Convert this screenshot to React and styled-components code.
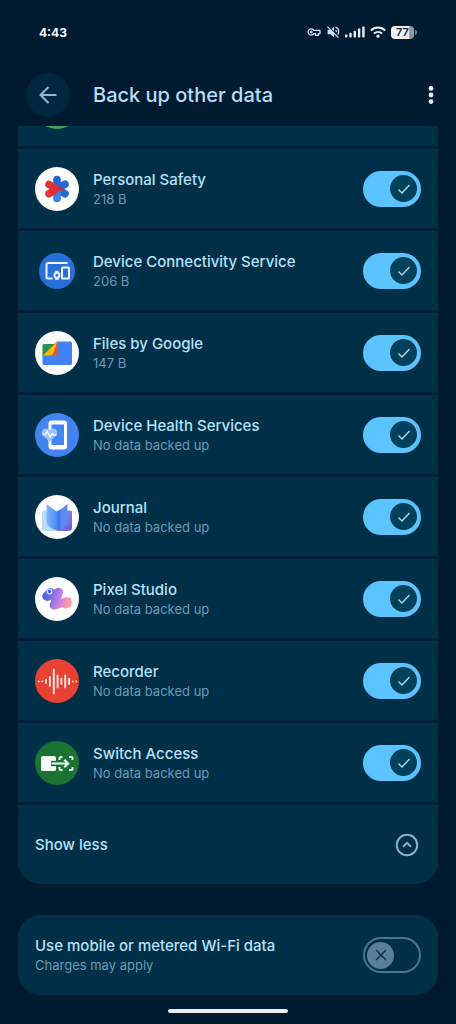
import React, { useState } from 'react';
import styled, { createGlobalStyle } from 'styled-components';

const GlobalStyle = createGlobalStyle`
    * {
        box-sizing: border-box;
    }
    body {
        margin: 0;
        background: #001a2f;
        font-family: Inter, 'Open Sans', sans-serif;
    }
`

const Screen = styled.div`
    display: flex;
    flex-direction: column;
    min-height: 100vh;
    color: #b5e2fc;
`

const StatusBar = styled.div`
    display: flex;
    align-items: center;
    justify-content: space-between;
    height: 64px;
    padding: 0 39px;
`

const Clock = styled.time`
    color: #f2f9ff;
    font-size: 12px;
    font-weight: 700;
`

const StatusIcons = styled.div`
    display: flex;
    align-items: center;
    gap: 5px;
    > svg {
        display: block;
    }
`

const AppBar = styled.header`
    display: flex;
    align-items: center;
    height: 62px;
    padding: 0 18px 0 26px;
`

const BackButton = styled.button`
    display: flex;
    align-items: center;
    justify-content: center;
    width: 44px;
    height: 44px;
    padding: 0;
    border: 0;
    border-radius: 50%;
    background: #002740;
    color: #8fb9d3;
    cursor: pointer;
`

const PageTitle = styled.h1`
    flex: 1;
    margin: 0 0 0 23px;
    color: #b9dcf8;
    font-size: 20px;
    font-weight: 450;
    line-height: 28px;
`

const MenuButton = styled.button`
    display: flex;
    padding: 8px 4px;
    border: 0;
    background: none;
    color: #e6f4ff;
    cursor: pointer;
`

const Content = styled.main`
    display: flex;
    flex-direction: column;
    gap: 31px;
    padding: 0 18px;
`

const AppList = styled.ul`
    display: flex;
    flex-direction: column;
    gap: 3px;
    margin: 0;
    padding: 0;
    list-style: none;
    overflow: hidden;
    border-radius: 0 0 22px 22px;
    background: #001f3b;
`

const Row = styled.li`
    display: flex;
    align-items: center;
    flex-shrink: 0;
    gap: 14px;
    height: 79px;
    padding: 0 17px;
    background: #002f48;
`

// row that is mostly scrolled under the app bar
const ScrolledRow = styled.li`
    display: flex;
    align-items: flex-end;
    height: 20px;
    overflow: hidden;
    background: #002f48;
`

const IconSlot = styled.div`
    display: flex;
    flex-shrink: 0;
    > svg {
        display: block;
        width: 44px;
        height: 44px;
    }
`

const RowText = styled.div`
    display: flex;
    flex: 1;
    flex-direction: column;
    min-width: 0;
`

const RowTitle = styled.label`
    font-size: 15px;
    font-weight: 500;
    line-height: 20px;
`

const RowDetail = styled.span`
    color: #6b9bb8;
    font-size: 13px;
    line-height: 18px;
`

const SwitchBox = styled.span`
    display: grid;
    flex-shrink: 0;
    align-items: center;
    > * {
        grid-area: 1 / 1;
    }
`

const SwitchInput = styled.input`
    appearance: none;
    width: 58px;
    height: 36px;
    margin: 0;
    border: 2px solid #4a7590;
    border-radius: 18px;
    background: transparent;
    cursor: pointer;
    &:checked {
        border-color: #5bc3fd;
        background: #5bc3fd;
    }
`

const Thumb = styled.span`
    display: flex;
    align-items: center;
    justify-content: center;
    justify-self: ${({ $on }) => ($on ? 'end' : 'start')};
    width: 27px;
    height: 27px;
    margin: 0 4px;
    border-radius: 50%;
    background: ${({ $on }) => ($on ? '#00405a' : '#597f9b')};
    color: ${({ $on }) => ($on ? '#a9d8f0' : '#002f48')};
    pointer-events: none;
`

const ShowLess = styled.button`
    display: flex;
    flex: 1;
    align-items: center;
    justify-content: space-between;
    height: 100%;
    padding: 0 2px 0 0;
    border: 0;
    background: none;
    color: inherit;
    font-family: inherit;
    font-size: 15px;
    font-weight: 500;
    cursor: pointer;
    > svg {
        color: #82b2cf;
    }
`

const Card = styled.section`
    display: flex;
    align-items: center;
    height: 80px;
    padding: 0 17px;
    border-radius: 22px;
    background: #002f48;
`

const HomeIndicator = styled.div`
    width: 120px;
    height: 4px;
    margin: auto auto 11px;
    border-radius: 2px;
    background: #e9eef5;
`

function KeyIcon() {
    return (
        <svg width="14" height="10" viewBox="0 0 14 10" fill="none" stroke="#d3e3ef" strokeWidth="1.2">
            <path d="M6.8 3.4A3.1 3.1 0 1 0 6.8 6.6H8.6V8.4H11.4V6.6H13V3.4Z" strokeLinejoin="round" />
            <circle cx="4.2" cy="5" r="0.9" />
        </svg>
    )
}

function MutedIcon() {
    return (
        <svg width="14" height="14" viewBox="0 0 14 14" fill="none" stroke="#d3e3ef" strokeWidth="1.3">
            <path d="M1.6 4.8H4.3L8 8.5V12L4.6 9.2H1.6Z" fill="#d3e3ef" stroke="none" />
            <path d="M5.6 3.9L8 1.9V6.3Z" fill="#d3e3ef" stroke="none" />
            <path d="M1.4 1.6L12.4 12.6" />
            <path d="M9.6 2.2C11.8 3 12.8 5 12.6 7.2C12.5 8.2 12.2 9 11.7 9.7M9.6 5.2C10.2 5.7 10.5 6.4 10.4 7.2" />
        </svg>
    )
}

function SignalIcon() {
    return (
        <svg width="20" height="12" viewBox="0 0 20 12" fill="#e6f1fa">
            <rect x="0" y="8.4" width="2.4" height="3.1" rx="0.8" />
            <rect x="4.3" y="6.8" width="2.4" height="4.7" rx="0.8" />
            <rect x="8.6" y="4.8" width="2.4" height="6.7" rx="0.8" />
            <rect x="12.9" y="2.6" width="2.4" height="8.9" rx="0.8" />
            <rect x="17.2" y="0.4" width="2.4" height="11.1" rx="0.8" />
        </svg>
    )
}

function WifiIcon() {
    return (
        <svg width="16" height="12" viewBox="0 0 16 12" fill="none" stroke="#e6f1fa" strokeWidth="2">
            <path d="M0.9 4.6C5 0.6 11 0.6 15.1 4.6" />
            <path d="M3.9 7.6C6.3 5.4 9.7 5.4 12.1 7.6" />
            <circle cx="8" cy="10.2" r="1.6" fill="#e6f1fa" stroke="none" />
        </svg>
    )
}

const Battery = styled.div`
    display: flex;
    align-items: center;
    gap: 1px;
    &::after {
        content: '';
        width: 2px;
        height: 5px;
        border-radius: 0 2px 2px 0;
        background: #6d8292;
    }
`

const BatteryLevel = styled.span`
    width: 23px;
    height: 13px;
    border-radius: 4px;
    background: linear-gradient(to right, #f1f5f8 77%, #8b9ba8 77%);
    color: #10273a;
    font-size: 11px;
    font-weight: 600;
    line-height: 13px;
    text-align: center;
`

function SafetyIcon() {
    return (
        <svg viewBox="0 0 44 44" strokeLinecap="round">
            <defs>
                <linearGradient id="safetyRed" gradientUnits="userSpaceOnUse" x1="10" y1="0" x2="29" y2="0">
                    <stop offset="0.3" stopColor="#e8322f" />
                    <stop offset="1" stopColor="#b5304f" />
                </linearGradient>
            </defs>
            <circle cx="22" cy="22" r="22" fill="#fff" />
            <g stroke="#2767d2" strokeWidth="7.6">
                <path d="M22 22V12.6" />
                <path d="M22 22L30 17.2M22 22L30 26.8" />
            </g>
            <path d="M22 24V31.4" stroke="#3c83ee" strokeWidth="7.6" />
            <path d="M14 17.4L19 20.6M14 26.8L19 23.6" stroke="url(#safetyRed)" strokeWidth="7.6" />
            <path d="M17 16.4L28 21Q29.6 22 28 23L17 27.8Z" fill="url(#safetyRed)" />
        </svg>
    )
}

function ConnectivityIcon() {
    return (
        <svg viewBox="0 0 44 44" fill="none" stroke="#eef5ff" strokeWidth="2">
            <circle cx="22" cy="22" r="18" fill="#286fd8" stroke="none" />
            <path d="M32.5 14H13Q11.5 14 11.5 15.5V28Q11.5 29.5 13 29.5H17.5" />
            <rect x="27" y="18.5" width="7" height="11" rx="0.6" />
            <path d="M20.2 21.8H23.6V30.8H20.2Z" fill="#eef5ff" stroke="none" />
            <circle cx="21.9" cy="26.3" r="2.5" fill="#286fd8" />
        </svg>
    )
}

function FilesIcon() {
    return (
        <svg viewBox="0 0 44 44">
            <circle cx="22" cy="22" r="22" fill="#fff" />
            <path d="M22 10.5H35.5Q37 10.5 37 12V32.5Q37 34 35.5 34H9Q7.5 34 7.5 32.5V24Z" fill="#4382f4" />
            <path d="M9 13H20L7.5 25V14.5Q7.5 13 9 13Z" fill="#229650" />
            <path d="M22.3 10.5V22.5Q22.3 24.5 20.3 24.5H8Z" fill="#e4582e" />
            <path d="M22.3 10.5L8 24.5H14Q18 24.5 19 20.5Z" fill="#fbbc18" />
        </svg>
    )
}

function HealthIcon() {
    return (
        <svg viewBox="0 0 44 44" fill="none">
            <circle cx="22" cy="22" r="22" fill="#4284f0" />
            <path d="M16.5 7.5H29Q32 7.5 32 10.5V33.500Q32 36.5 29 36.5H16.5Q13.5 36.5 13.5 33.5V10.5Q13.5 7.5 16.5 7.5Z" fill="#fff" />
            <rect x="16.5" y="11.5" width="12.5" height="20.5" fill="#4284f0" />
            <path d="M14.5 28.5L8.5 23C5 19.5 7.5 15.5 10.7 15.5C12.7 15.5 13.8 16.5 14.5 17.5C15.2 16.5 16.3 15.5 18.3 15.5C21.5 15.5 24 19.5 20.5 23Z" fill="#9bc5fa" />
            <path d="M7.5 21.5H10L12.2 18.5L15.2 24L17.5 20.5L18.6 22H21.5" stroke="#f2f8ff" strokeWidth="1.4" />
        </svg>
    )
}

function JournalIcon() {
    return (
        <svg viewBox="0 0 44 44">
            <defs>
                <linearGradient id="journalPage" x1="0" x2="1">
                    <stop offset="0" stopColor="#82b4fa" />
                    <stop offset="1" stopColor="#4a8bf6" />
                </linearGradient>
                <linearGradient id="journalBack" x1="0" x2="1" y1="0" y2="1">
                    <stop offset="0" stopColor="#a1a4f4" />
                    <stop offset="1" stopColor="#6556d8" />
                </linearGradient>
            </defs>
            <circle cx="22" cy="22" r="22" fill="#fff" />
            <path d="M8.500 15.5H22V36H10.5Q7 36 7 32.5V17Q7 15.5 8.5 15.5Z" fill="#b8dcfa" />
            <path d="M22 15.5H35.5Q37 15.5 37 17V32.5Q37 36 33.5 36H22Z" fill="url(#journalBack)" />
            <path d="M11.5 9L22 17V35.5Q11.5 32.5 11.5 26Z" fill="url(#journalPage)" />
            <path d="M32.5 9L22 17V35.5Q32.5 32.5 32.5 26Z" fill="#5c8df2" />
            <path d="M22 17L25.5 14.5V34.3L22 35.5Z" fill="#4379e8" />
        </svg>
    )
}

function StudioIcon() {
    return (
        <svg viewBox="0 0 44 44" fill="none">
            <defs>
                <linearGradient id="studioStroke" gradientUnits="userSpaceOnUse" x1="7" y1="18" x2="37" y2="28">
                    <stop offset="0" stopColor="#3f63dc" />
                    <stop offset="0.25" stopColor="#6d6be2" />
                    <stop offset="0.5" stopColor="#b57be6" />
                    <stop offset="0.7" stopColor="#dd8bd0" />
                    <stop offset="0.85" stopColor="#fb989f" />
                    <stop offset="1" stopColor="#fba79d" />
                </linearGradient>
            </defs>
            <circle cx="22" cy="22" r="22" fill="#fff" />
            <g stroke="url(#studioStroke)" strokeWidth="8.4" strokeLinecap="round" strokeLinejoin="round">
                <path d="M11.4 19.3L15.2 15.2" />
                <path d="M12.5 19.6L24 15L18.8 28.4L32.6 24.4" />
                <path d="M31 27.4L32.600 26.5" />
            </g>
            <circle cx="14.5" cy="14.4" r="2.4" fill="#4d6ade" stroke="#dfe6ff" strokeWidth="1.2" />
        </svg>
    )
}

function RecorderIcon() {
    return (
        <svg viewBox="0 0 44 44" fill="none" stroke="#ffe9e4" strokeWidth="1.9" strokeLinecap="round">
            <circle cx="22" cy="22" r="22" fill="#e94235" stroke="none" />
            <path d="M3.7 22.4H3.8M7.3 22.4H7.4M11 20.8V24M14.9 18V26.8M18.8 10.400V34.4M22.6 16.4V28.4M26.4 19.8V25M30.2 16.4V28.4M34 19.8V25M37.8 22.4H37.9M41.2 22.4H41.3" />
        </svg>
    )
}

function SwitchAccessIcon() {
    return (
        <svg viewBox="0 0 44 44" fill="none" stroke="#f4fbf5" strokeWidth="2">
            <circle cx="22" cy="22" r="22" fill="#1a7332" stroke="none" />
            <path d="M7.5 15H19.5Q21 15 21 16.5V28.5Q21 30 19.5 30H7.5Q6 30 6 28.5V16.5Q6 15 7.5 15Z" fill="#f4fbf5" stroke="none" />
            <path d="M16 22.500H24" stroke="#1a7332" strokeWidth="5.4" />
            <path d="M16.5 22.5H33M29.3 18.7L33.1 22.5L29.3 26.3" />
            <path d="M24.5 19V17.5Q24.5 16 26 16H27.5M34 16H36.5Q37.500 16 37.5 17V19M37.5 26V28Q37.5 29 36.5 29H34M27.5 29H26Q24.5 29 24.5 27.5V26" />
        </svg>
    )
}

const apps = [
    { id: 'safety', name: 'Personal Safety', detail: '218 B', Icon: SafetyIcon },
    { id: 'connectivity', name: 'Device Connectivity Service', detail: '206 B', Icon: ConnectivityIcon },
    { id: 'files', name: 'Files by Google', detail: '147 B', Icon: FilesIcon },
    { id: 'health', name: 'Device Health Services', detail: 'No data backed up', Icon: HealthIcon },
    { id: 'journal', name: 'Journal', detail: 'No data backed up', Icon: JournalIcon },
    { id: 'studio', name: 'Pixel Studio', detail: 'No data backed up', Icon: StudioIcon },
    { id: 'recorder', name: 'Recorder', detail: 'No data backed up', Icon: RecorderIcon },
    { id: 'switch-access', name: 'Switch Access', detail: 'No data backed up', Icon: SwitchAccessIcon },
]

function Switch({ id, initial }) {
    const [on, setOn] = useState(initial)
    return (
        <SwitchBox>
            <SwitchInput id={id} type="checkbox" role="switch" checked={on} onChange={() => setOn(!on)} />
            <Thumb $on={on}>
                <svg width="16" height="16" viewBox="0 0 16 16" fill="none" stroke="currentColor" strokeWidth="1.4">
                    <path d={on ? 'M2.5 8.5L6 12L13.5 4' : 'M3 3L13 13M13 3L3 13'} />
                </svg>
            </Thumb>
        </SwitchBox>
    );
}

function AppRow({ app }) {
    const { id, name, detail, Icon } = app
    return (
        <Row>
            <IconSlot><Icon /></IconSlot>
            <RowText>
                <RowTitle htmlFor={id}>{name}</RowTitle>
                <RowDetail>{detail}</RowDetail>
            </RowText>
            <Switch id={id} initial={true} />
        </Row>
    );
}

function App() {
    return (
        <Screen>
            <GlobalStyle />
            <StatusBar>
                <Clock>4:43</Clock>
                <StatusIcons>
                    <KeyIcon />
                    <MutedIcon />
                    <SignalIcon />
                    <WifiIcon />
                    <Battery>
                        <BatteryLevel>77</BatteryLevel>
                    </Battery>
                </StatusIcons>
            </StatusBar>
            <AppBar>
                <BackButton aria-label="Back">
                    <svg width="20" height="20" viewBox="0 0 20 20" fill="none" stroke="currentColor" strokeWidth="2">
                        <path d="M18.5 10H2.5M10.5 2L2.5 10L10.5 18" />
                    </svg>
                </BackButton>
                <PageTitle>Back up other data</PageTitle>
                <MenuButton aria-label="More options">
                    <svg width="6" height="20" viewBox="0 0 6 20" fill="currentColor">
                        <circle cx="3" cy="3.4" r="2.4" />
                        <circle cx="3" cy="10" r="2.4" />
                        <circle cx="3" cy="16.6" r="2.4" />
                    </svg>
                </MenuButton>
            </AppBar>
            <Content>
                <AppList>
                    <ScrolledRow>
                        <Row as="div">
                            <IconSlot>
                                <svg viewBox="0 0 44 44">
                                    <circle cx="22" cy="22" r="22" fill="#3fa35c" />
                                </svg>
                            </IconSlot>
                        </Row>
                    </ScrolledRow>
                    {apps.map((app) => (
                        <AppRow key={app.id} app={app} />
                    ))}
                    <Row>
                        <ShowLess>
                            Show less
                            <svg width="24" height="24" viewBox="0 0 24 24" fill="none" stroke="currentColor" strokeWidth="2">
                                <circle cx="12" cy="12" r="10.2" />
                                <path d="M8 13.8L12 9.8L16 13.8" />
                            </svg>
                        </ShowLess>
                    </Row>
                </AppList>
                <Card>
                    <RowText>
                        <RowTitle htmlFor="metered">Use mobile or metered Wi-Fi data</RowTitle>
                        <RowDetail>Charges may apply</RowDetail>
                    </RowText>
                    <Switch id="metered" initial={false} />
                </Card>
            </Content>
            <HomeIndicator />
        </Screen>
    );
}

export default App;
